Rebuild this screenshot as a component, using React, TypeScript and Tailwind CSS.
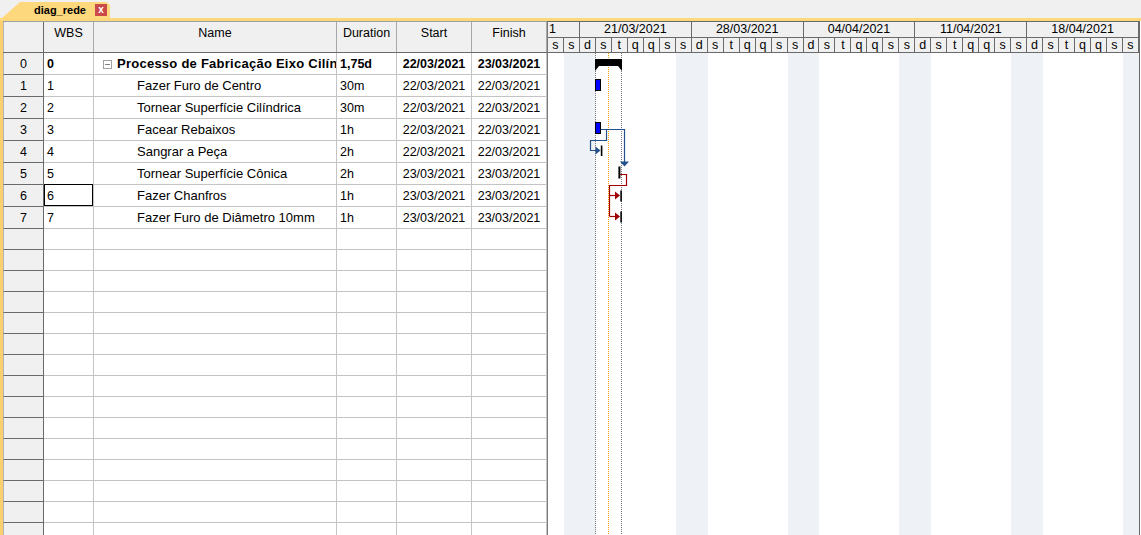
import React from 'react';

type Task = {
    id: number;
    name: string;
    duration: string;
    start: string;
    finish: string;
    summary?: boolean;
};

const tasks: Task[] = [
    { id: 0, name: 'Processo de Fabricação Eixo Cilíndrico', duration: '1,75d', start: '22/03/2021', finish: '23/03/2021', summary: true },
    { id: 1, name: 'Fazer Furo de Centro', duration: '30m', start: '22/03/2021', finish: '22/03/2021' },
    { id: 2, name: 'Tornear Superfície Cilíndrica', duration: '30m', start: '22/03/2021', finish: '22/03/2021' },
    { id: 3, name: 'Facear Rebaixos', duration: '1h', start: '22/03/2021', finish: '22/03/2021' },
    { id: 4, name: 'Sangrar a Peça', duration: '2h', start: '22/03/2021', finish: '22/03/2021' },
    { id: 5, name: 'Tornear Superfície Cônica', duration: '2h', start: '23/03/2021', finish: '23/03/2021' },
    { id: 6, name: 'Fazer Chanfros', duration: '1h', start: '23/03/2021', finish: '23/03/2021' },
    { id: 7, name: 'Fazer Furo de Diâmetro 10mm', duration: '1h', start: '23/03/2021', finish: '23/03/2021' },
];

const EMPTY_ROWS = 15;
const DAY_LETTERS = ['d', 's', 't', 'q', 'q', 's', 's'];
// first visible day is friday 19/03/2021
const days = Array.from({ length: 37 }, (_, i) => {
    const dow = (i + 5) % 7;
    return { letter: DAY_LETTERS[dow], weekend: dow === 0 || dow === 6 };
});
const weeks = ['21/03/2021', '28/03/2021', '04/04/2021', '11/04/2021', '18/04/2021'];

const TabBar = () => (
    <div className="h-[18px] shrink-0 bg-[#f0f0f0] flex items-end pl-[2px]">
        <div className="h-[16px] w-[108px] bg-[#fdd87c] flex items-center pl-[32px] [clip-path:polygon(0_100%,18px_0,104px_0,108px_3px,108px_100%)]">
            <span className="text-[11px] font-bold text-black leading-none">diag_rede</span>
            <span className="ml-[9px] w-[12px] h-[12px] bg-[#c94a48] flex items-center justify-center text-white text-[10px] font-bold leading-none pb-[1px]">x</span>
        </div>
    </div>
);

const TableHeader = () => (
    <div className="flex shrink-0 h-[32px] border-t border-t-[#a0a0a0] border-b border-b-[#6a6a6a] bg-[#f0f0f0]">
        <div className="w-[41px] border-l border-l-[#b4b4b4] border-r border-r-[#6a6a6a]" />
        <div className="w-[50px] border-r border-r-[#a8a8a8] text-center pt-[2px]">WBS</div>
        <div className="w-[243px] border-r border-r-[#a8a8a8] text-center pt-[2px]">Name</div>
        <div className="w-[60px] border-r border-r-[#a8a8a8] text-center pt-[2px]">Duration</div>
        <div className="w-[75px] border-r border-r-[#a8a8a8] text-center pt-[2px]">Start</div>
        <div className="w-[75px] border-r border-r-[#a8a8a8] text-center pt-[2px]">Finish</div>
    </div>
);

const TaskRow = ({ task }: { task: Task }) => {
    const weight = task.summary ? 'font-bold' : '';
    return (
        <div className={`flex shrink-0 h-[22px] ${weight}`}>
            <div className="w-[41px] bg-[#f0f0f0] border-l border-l-[#b4b4b4] border-r border-r-[#6a6a6a] border-b border-b-[#6a6a6a] flex items-center justify-center pt-px font-normal">
                {task.id}
            </div>
            <div className="relative w-[50px] border-r border-b border-[#c4c4c4] flex items-center pl-[3px] pt-px">
                {task.id}
                {task.id === 6 && <div className="absolute -top-px left-0 right-0 bottom-0 border border-black" />}
            </div>
            <div className={`w-[243px] border-r border-b border-[#c4c4c4] flex items-center pt-px overflow-hidden whitespace-nowrap text-[13px] ${task.summary ? 'pl-[9px] tracking-[0.25px]' : 'pl-[43px]'}`}>
                {task.summary && (
                    <span className="w-[9px] h-[9px] border border-[#a0a0a0] flex items-center justify-center mr-[5px] shrink-0">
                        <span className="w-[5px] h-px bg-[#808080]" />
                    </span>
                )}
                {task.name}
            </div>
            <div className="w-[60px] border-r border-b border-[#c4c4c4] flex items-center pl-[3px] pt-px">{task.duration}</div>
            <div className="w-[75px] border-r border-b border-[#c4c4c4] flex items-center justify-center pt-px">{task.start}</div>
            <div className="w-[75px] border-r border-b border-[#c4c4c4] flex items-center justify-center pt-px">{task.finish}</div>
        </div>
    );
};

const EmptyRow = () => (
    <div className="flex h-[21px] shrink-0">
        <div className="w-[41px] bg-[#f0f0f0] border-l border-l-[#b4b4b4] border-r border-r-[#6a6a6a] border-b border-b-[#6a6a6a]" />
        <div className="w-[50px] border-r border-b border-[#c4c4c4]" />
        <div className="w-[243px] border-r border-b border-[#c4c4c4]" />
        <div className="w-[60px] border-r border-b border-[#c4c4c4]" />
        <div className="w-[75px] border-r border-b border-[#c4c4c4]" />
        <div className="w-[75px] border-r border-b border-[#c4c4c4]" />
    </div>
);

const GanttHeader = () => (
    <div className="h-[32px] shrink-0 border-t border-t-[#6a6a6a] bg-[#f0f0f0] flex flex-col">
        <div className="h-[16px] shrink-0 flex border-b border-b-[#6a6a6a] leading-none">
            {/* tail of the previous week's label, cut by the scroll position */}
            <div className="w-[32px] border-r border-r-[#6a6a6a] pt-[1px] pl-[1px]">1</div>
            {weeks.map((w) => (
                <div key={w} className="w-[112px] border-r border-r-[#6a6a6a] text-center pt-[1px]">
                    {w}
                </div>
            ))}
        </div>
        <div className="h-[15px] shrink-0 flex border-b border-b-[#6a6a6a] leading-none">
            {days.map((d, i) => (
                <div key={i} className="w-[16px] border-r border-r-[#6a6a6a] text-center pt-[1px]">
                    {d.letter}
                </div>
            ))}
        </div>
    </div>
);

const GanttChart = () => (
    <div className="relative flex-1 flex">
        {days.map((d, i) => (
            <div key={i} className={`w-[16px] ${d.weekend ? 'bg-[#eef1f5]' : 'bg-white'}`} />
        ))}
        <svg className="absolute inset-0" width={592} height={482} viewBox="548 53 592 482">
            <line x1={595.5} y1={53} x2={595.5} y2={535} stroke="#7a7a7a" strokeDasharray="1 1" />
            <line x1={608.5} y1={53} x2={608.5} y2={535} stroke="#ffa000" strokeDasharray="1 1" />
            <line x1={621.5} y1={53} x2={621.5} y2={535} stroke="#7a7a7a" strokeDasharray="1 1" />

            <path d="M595,59 H622 V71 L618,66 H599 L595,71 Z" fill="#000" />

            <rect x={595.5} y={79.5} width={5} height={11} fill="#0000ff" stroke="#000" />
            <rect x={595.5} y={122.5} width={5} height={11} fill="#0000ff" stroke="#000" />

            <g stroke="#24508c" strokeWidth={1.2} fill="none">
                <path d="M601,129.5 H624.5 V162" />
                <path d="M606.5,129.5 V140.5 H590.5 V150.5 H596" />
            </g>
            <path d="M620,161.5 H629 L624.5,166.5 Z" fill="#24508c" />
            <path d="M595.5,146.5 L600.5,150.5 L595.5,154.5 Z" fill="#24508c" />
            <rect x={600.8} y={145.5} width={1.6} height={10.5} fill="#000" />

            <rect x={618.4} y={166.5} width={2} height={12} fill="#000" />
            <g stroke="#a00000" strokeWidth={1.2} fill="none">
                <path d="M620,174.5 H626.5 V185.5 H609.5 V216.5" />
                <path d="M609.5,195.5 H615" />
                <path d="M609.5,216.5 H615" />
            </g>
            <path d="M615,191.5 L620,195.5 L615,199.5 Z" fill="#a00000" />
            <path d="M615,212.5 L620,216.5 L615,220.5 Z" fill="#a00000" />
            <rect x={620.3} y={190.5} width={1.6} height={11} fill="#000" />
            <rect x={620.3} y={211.5} width={1.6} height={11} fill="#000" />
        </svg>
    </div>
);

export default function App() {
    return (
        <div className="w-[1141px] h-[535px] overflow-hidden bg-white flex flex-col font-['Liberation_Sans',Arial,sans-serif] text-[12.5px] text-black">
            <TabBar />
            <div className="h-[3px] shrink-0 bg-[#fdd87c]" />
            <div className="flex-1 flex min-h-0 border-l-[3px] border-l-[#f9d06c]">
                <div className="w-[544px] flex flex-col overflow-hidden">
                    <TableHeader />
                    {tasks.map((t) => (
                        <TaskRow key={t.id} task={t} />
                    ))}
                    {Array.from({ length: EMPTY_ROWS }, (_, i) => (
                        <EmptyRow key={i} />
                    ))}
                </div>
                <div className="w-[593px] flex flex-col border-l border-l-[#7a7a7a] border-r border-r-[#6a6a6a] overflow-hidden">
                    <GanttHeader />
                    <GanttChart />
                </div>
            </div>
        </div>
    );
}
